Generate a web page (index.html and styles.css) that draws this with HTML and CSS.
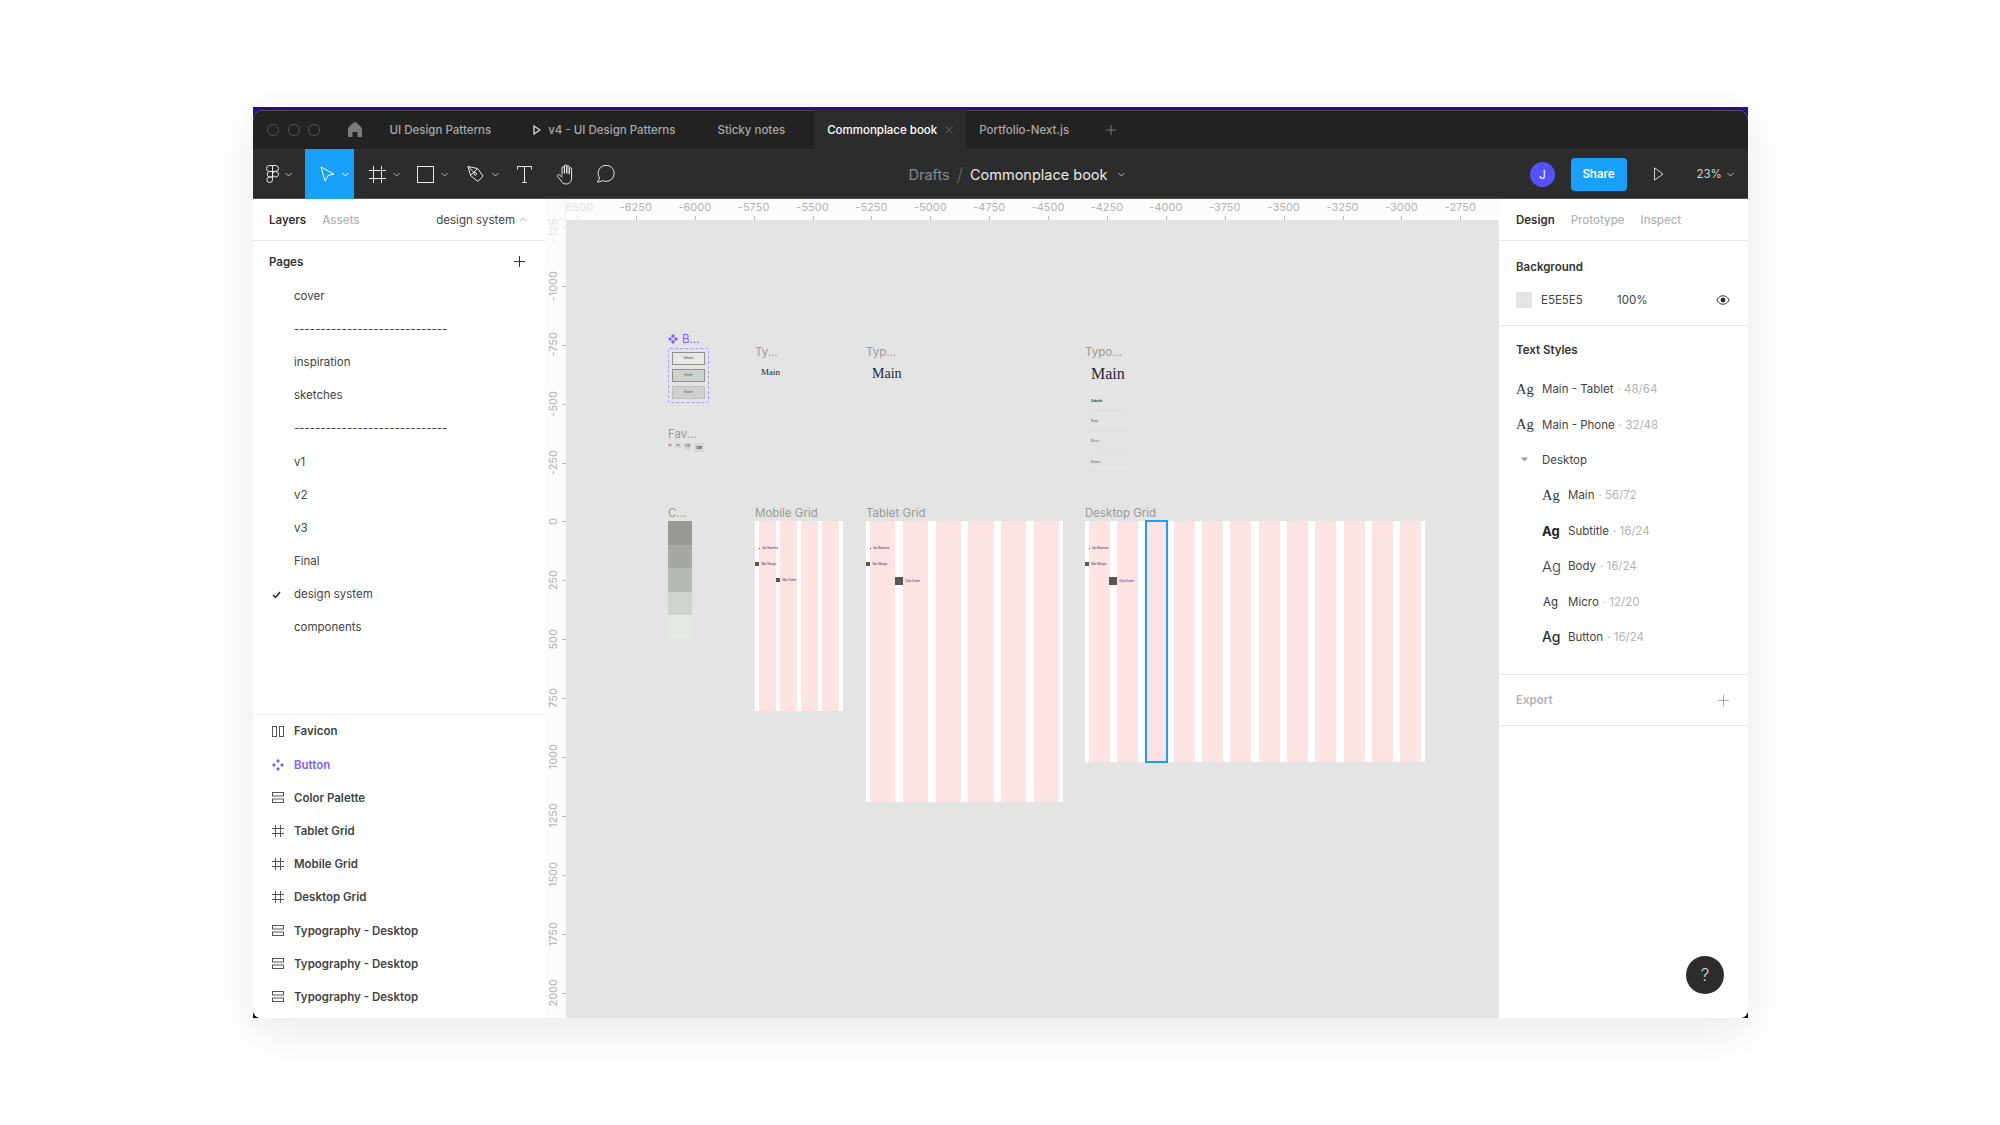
FILE: index.html
```html
<!DOCTYPE html>
<html lang="en">
<head>
    <meta charset="UTF-8">
    <title>Commonplace book - Figma</title>
    <link rel="stylesheet" href="styles.css">
</head>
<body>
    <div class="window">
        <div class="app">
            <!-- tabs -->
            <div class="tabbar">
                <div class="lights"><span></span><span></span><span></span></div>
                <svg class="home" width="16" height="15" viewBox="0 0 16 15"><path d="M8 0 C9 0 15 5 15 7 V15 H10.500 V10 H5.500 V15 H1 V7 C1 5 7 0 8 0Z" fill="#7a7a7a"/></svg>
                <div class="tab">UI Design Patterns</div>
                <div class="tab"><svg class="tab-play" width="8" height="10" viewBox="0 0 8 10"><path d="M1 1 L7 5 L1 9Z" fill="none" stroke="#e0e0e0" stroke-width="1.300"/></svg>v4 - UI Design Patterns</div>
                <div class="tab">Sticky notes</div>
                <div class="tab tab-active">Commonplace book
                    <svg class="tab-close" width="8" height="8" viewBox="0 0 8 8"><path d="M0.500 0.500 L7.500 7.500 M7.500 0.500 L0.500 7.500" stroke="#5f5f5f"/></svg>
                </div>
                <div class="tab">Portfolio-Next.js</div>
                <svg class="tab-add" width="10" height="10" viewBox="0 0 10 10"><path d="M5 0 V10 M0 5 H10" stroke="#777"/></svg>
            </div>

            <!-- toolbar -->
            <div class="toolbar">
                <div class="tools">
                    <div class="tool tool-logo">
                        <svg width="13" height="18" viewBox="0 0 13 18" fill="none" stroke="#e8e8e8"><path d="M6.500 0.500 H3.500 a3 3 0 0 0 0 6 H6.500Z M6.500 0.500 H9.500 a3 3 0 0 1 0 6 H6.500Z M6.500 6.500 H3.500 a2.800 2.800 0 0 0 0 5.500 H6.500Z M12.500 9.250 a3 2.800 0 1 1 -6 0 a3 2.800 0 1 1 6 0Z M6.500 12 H3.500 a2.800 2.800 0 1 0 3 2.800Z"/></svg>
                        <svg class="chev" width="7" height="5" viewBox="0 0 7 5"><path d="M0.500 1 L3.500 4 L6.500 1"/></svg>
                    </div>
                    <div class="tool tool-active">
                        <svg width="15" height="16" viewBox="0 0 15 16" fill="none" stroke="#fff"><path d="M1 1 L14 8 L8 9.500 L5 15Z"/></svg>
                        <svg class="chev chev-on" width="7" height="5" viewBox="0 0 7 5"><path d="M0.500 1 L3.500 4 L6.500 1"/></svg>
                    </div>
                    <div class="tool tool-frame">
                        <svg width="17" height="17" viewBox="0 0 17 17" fill="none" stroke="#e8e8e8"><path d="M4.500 0 V17 M12.500 0 V17 M0 4.500 H17 M0 12.500 H17"/></svg>
                        <svg class="chev" width="7" height="5" viewBox="0 0 7 5"><path d="M0.500 1 L3.500 4 L6.500 1"/></svg>
                    </div>
                    <div class="tool tool-rect">
                        <svg width="17" height="17" viewBox="0 0 17 17" fill="none" stroke="#e8e8e8"><rect x="0.500" y="0.500" width="16" height="16"/></svg>
                        <svg class="chev" width="7" height="5" viewBox="0 0 7 5"><path d="M0.500 1 L3.500 4 L6.500 1"/></svg>
                    </div>
                    <div class="tool tool-pen">
                        <svg width="18" height="18" viewBox="0 0 18 18" fill="none" stroke="#e8e8e8"><path d="M1 1.500 L10.500 3.500 L16 11 L11 16.500 L3.500 10.500Z M1 1.500 L7.500 8 M10.500 3.500 L3.500 10.500"/><circle cx="8.300" cy="8.800" r="1.300"/></svg>
                        <svg class="chev" width="7" height="5" viewBox="0 0 7 5"><path d="M0.500 1 L3.500 4 L6.500 1"/></svg>
                    </div>
                    <div class="tool tool-plain">
                        <svg width="15" height="17" viewBox="0 0 15 17" fill="none" stroke="#e8e8e8"><path d="M0.500 3.500 V0.500 H14.500 V3.500 M7.500 0.500 V16.500 M5 16.500 H10"/></svg>
                    </div>
                    <div class="tool tool-plain tool-hand">
                        <svg width="20" height="21" viewBox="0 0 20 21" fill="none" stroke="#e8e8e8" stroke-linejoin="round" stroke-linecap="round"><path d="M6 11 V4 a1.200 1.200 0 0 1 2.400 0 V9 M8.400 9 V2 a1.200 1.200 0 0 1 2.400 0 V9 M10.800 9 V3 a1.200 1.200 0 0 1 2.400 0 V9.500 M13.200 9.500 V5 a1.200 1.200 0 0 1 2.400 0 V14 c0 3.500 -2 6 -5.500 6 c-3 0 -4 -1.500 -5.500 -4 L1.500 12.500 c-0.800 -1.300 1 -2.600 2.200 -1.500 L6 13"/></svg>
                    </div>
                    <div class="tool tool-plain tool-comment">
                        <svg width="19" height="18" viewBox="0 0 19 18" fill="none" stroke="#e8e8e8"><path d="M1.500 17 L3.600 13 A8 8 0 1 1 6.500 15.500 C5 16.500 3 17 1.500 17Z"/></svg>
                    </div>
                </div>
                <div class="crumbs">
                    <span class="crumb-dim">Drafts</span>
                    <span class="crumb-sep">/</span>
                    <span class="crumb-file">Commonplace book</span>
                    <svg class="chev" width="7" height="5" viewBox="0 0 7 5"><path d="M0.500 1 L3.500 4 L6.500 1"/></svg>
                </div>
                <div class="actions">
                    <div class="avatar">J</div>
                    <div class="share">Share</div>
                    <svg class="present" width="10" height="14" viewBox="0 0 10 14" fill="none" stroke="#d0d0d0"><path d="M0.500 0.800 L9 7 L0.500 13.200Z"/></svg>
                    <div class="zoom-level">23%</div>
                    <svg class="chev" width="7" height="5" viewBox="0 0 7 5"><path d="M0.500 1 L3.500 4 L6.500 1"/></svg>
                </div>
            </div>

            <div class="workspace">
                <!-- left panel -->
                <aside class="left-panel">
                    <div class="panel-tabs">
                        <span class="panel-tab-on">Layers</span>
                        <span class="panel-tab-off">Assets</span>
                        <span class="page-pick">design system</span>
                        <svg class="caret-up" width="7" height="5" viewBox="0 0 7 5" fill="none" stroke="#aaa"><path d="M0.500 4 L3.500 1 L6.500 4"/></svg>
                    </div>
                    <div class="pages">
                        <div class="pages-head">
                            <span class="section-title">Pages</span>
                            <svg width="11" height="11" viewBox="0 0 11 11" stroke="#333"><path d="M5.500 0 V11 M0 5.500 H11"/></svg>
                        </div>
                        <div class="page-row">cover</div>
                        <div class="page-row">-----------------------------</div>
                        <div class="page-row">inspiration</div>
                        <div class="page-row">sketches</div>
                        <div class="page-row">-----------------------------</div>
                        <div class="page-row">v1</div>
                        <div class="page-row">v2</div>
                        <div class="page-row">v3</div>
                        <div class="page-row">Final</div>
                        <div class="page-row page-current">
                            <svg class="check" width="9" height="8" viewBox="0 0 9 8" fill="none" stroke="#222" stroke-width="1.500"><path d="M1 4 L3.500 6.500 L8 1"/></svg>
                            design system
                        </div>
                        <div class="page-row">components</div>
                    </div>
                    <div class="layers">
                        <div class="layer-row">
                            <svg width="12" height="11" viewBox="0 0 12 11" fill="none" stroke="#555"><rect x="0.500" y="0.500" width="4" height="10"/><rect x="7.500" y="0.500" width="4" height="10"/></svg>
                            Favicon
                        </div>
                        <div class="layer-row layer-comp">
                            <svg width="12" height="12" viewBox="0 0 12 12" fill="#7b61ff"><path d="M6 0 L8 2 L6 4 L4 2Z M2 4 L4 6 L2 8 L0 6Z M10 4 L12 6 L10 8 L8 6Z M6 8 L8 10 L6 12 L4 10Z"/></svg>
                            Button
                        </div>
                        <div class="layer-row">
                            <svg width="12" height="11" viewBox="0 0 12 11" fill="none" stroke="#555"><rect x="0.500" y="0.500" width="11" height="3.500"/><rect x="0.500" y="7" width="11" height="3.500"/></svg>
                            Color Palette
                        </div>
                        <div class="layer-row">
                            <svg width="12" height="12" viewBox="0 0 12 12" fill="none" stroke="#555"><path d="M3.500 0 V12 M8.500 0 V12 M0 3.500 H12 M0 8.500 H12"/></svg>
                            Tablet Grid
                        </div>
                        <div class="layer-row">
                            <svg width="12" height="12" viewBox="0 0 12 12" fill="none" stroke="#555"><path d="M3.500 0 V12 M8.500 0 V12 M0 3.500 H12 M0 8.500 H12"/></svg>
                            Mobile Grid
                        </div>
                        <div class="layer-row">
                            <svg width="12" height="12" viewBox="0 0 12 12" fill="none" stroke="#555"><path d="M3.500 0 V12 M8.500 0 V12 M0 3.500 H12 M0 8.500 H12"/></svg>
                            Desktop Grid
                        </div>
                        <div class="layer-row">
                            <svg width="12" height="11" viewBox="0 0 12 11" fill="none" stroke="#555"><rect x="0.500" y="0.500" width="11" height="3.500"/><rect x="0.500" y="7" width="11" height="3.500"/></svg>
                            Typography - Desktop
                        </div>
                        <div class="layer-row">
                            <svg width="12" height="11" viewBox="0 0 12 11" fill="none" stroke="#555"><rect x="0.500" y="0.500" width="11" height="3.500"/><rect x="0.500" y="7" width="11" height="3.500"/></svg>
                            Typography - Desktop
                        </div>
                        <div class="layer-row">
                            <svg width="12" height="11" viewBox="0 0 12 11" fill="none" stroke="#555"><rect x="0.500" y="0.500" width="11" height="3.500"/><rect x="0.500" y="7" width="11" height="3.500"/></svg>
                            Typography - Desktop
                        </div>
                    </div>
                </aside>

                <!-- canvas with rulers -->
                <main class="stage">
                    <div class="ruler-corner"></div>
                    <div class="ruler-top">
                        <span class="mark mark-fade">-6500</span>
                        <span class="mark">-6250</span>
                        <span class="mark">-6000</span>
                        <span class="mark">-5750</span>
                        <span class="mark">-5500</span>
                        <span class="mark">-5250</span>
                        <span class="mark">-5000</span>
                        <span class="mark">-4750</span>
                        <span class="mark">-4500</span>
                        <span class="mark">-4250</span>
                        <span class="mark">-4000</span>
                        <span class="mark">-3750</span>
                        <span class="mark">-3500</span>
                        <span class="mark">-3250</span>
                        <span class="mark">-3000</span>
                        <span class="mark">-2750</span>
                    </div>
                    <div class="ruler-left">
                        <span class="vmark vmark-fade"><i>-1250</i></span>
                        <span class="vmark"><i>-1000</i></span>
                        <span class="vmark"><i>-750</i></span>
                        <span class="vmark"><i>-500</i></span>
                        <span class="vmark"><i>-250</i></span>
                        <span class="vmark"><i>0</i></span>
                        <span class="vmark"><i>250</i></span>
                        <span class="vmark"><i>500</i></span>
                        <span class="vmark"><i>750</i></span>
                        <span class="vmark"><i>1000</i></span>
                        <span class="vmark"><i>1250</i></span>
                        <span class="vmark"><i>1500</i></span>
                        <span class="vmark"><i>1750</i></span>
                        <span class="vmark"><i>2000</i></span>
                    </div>
                    <div class="canvas">
                        <div class="frame frame-button">
                            <div class="frame-label label-comp">
                                <svg width="10" height="10" viewBox="0 0 12 12" fill="#7b61ff"><path d="M6 0 L8.500 2.500 L6 5 L3.500 2.500Z M2.500 3.500 L5 6 L2.500 8.500 L0 6Z M9.500 3.500 L12 6 L9.500 8.500 L7 6Z M6 7 L8.500 9.500 L6 12 L3.500 9.500Z"/></svg>
                                B...
                            </div>
                            <div class="btn-set">
                                <div class="mini-btn mini-default">Default</div>
                                <div class="mini-btn mini-hover">Hover</div>
                                <div class="mini-btn mini-active">Active</div>
                            </div>
                        </div>

                        <div class="frame frame-fav">
                            <div class="frame-label">Fav...</div>
                            <div class="fav-row">
                                <span class="fav fav-1">OB</span>
                                <span class="fav fav-2">OB</span>
                                <span class="fav fav-3">OB</span>
                                <span class="fav fav-4">OB</span>
                            </div>
                        </div>

                        <div class="frame frame-colors">
                            <div class="frame-label">C...</div>
                            <div class="swatch sw-1"></div>
                            <div class="swatch sw-2"></div>
                            <div class="swatch sw-3"></div>
                            <div class="swatch sw-4"></div>
                            <div class="swatch sw-5"></div>
                        </div>

                        <div class="frame frame-ty-s">
                            <div class="frame-label">Ty...</div>
                            <div class="type-main">Main</div>
                        </div>
                        <div class="frame frame-ty-m">
                            <div class="frame-label">Typ...</div>
                            <div class="type-main">Main</div>
                        </div>
                        <div class="frame frame-ty-l">
                            <div class="frame-label">Typo...</div>
                            <div class="type-main">Main</div>
                            <div class="type-small type-sub">Subtitle</div>
                            <div class="type-small">Body</div>
                            <div class="type-small">Micro</div>
                            <div class="type-small">Button</div>
                        </div>

                        <div class="frame frame-mobile">
                            <div class="frame-label">Mobile Grid</div>
                            <div class="grid grid-mobile">
                                <div class="col"></div><div class="col"></div><div class="col"></div><div class="col"></div>
                                <span class="note note-base"><b class="dot"></b>4pt Baseline</span>
                                <span class="note note-margin"><b class="sq"></b>16pt Margin</span>
                                <span class="note note-gutter"><b class="sq"></b>16pt Gutter</span>
                            </div>
                        </div>
                        <div class="frame frame-tablet">
                            <div class="frame-label">Tablet Grid</div>
                            <div class="grid grid-tablet">
                                <div class="col"></div><div class="col"></div><div class="col"></div>
                                <div class="col"></div><div class="col"></div><div class="col"></div>
                                <span class="note note-base"><b class="dot"></b>4pt Baseline</span>
                                <span class="note note-margin"><b class="sq"></b>16pt Margin</span>
                                <span class="note note-gutter-lg"><b class="sq-lg"></b>32pt Gutter</span>
                            </div>
                        </div>
                        <div class="frame frame-desktop">
                            <div class="frame-label">Desktop Grid</div>
                            <div class="grid grid-desktop">
                                <div class="col"></div><div class="col"></div><div class="col col-selected"></div><div class="col"></div>
                                <div class="col"></div><div class="col"></div><div class="col"></div><div class="col"></div>
                                <div class="col"></div><div class="col"></div><div class="col"></div><div class="col"></div>
                                <span class="note note-base"><b class="dot"></b>4pt Baseline</span>
                                <span class="note note-margin"><b class="sq"></b>16pt Margin</span>
                                <span class="note note-gutter-lg"><b class="sq-lg"></b>32pt Gutter</span>
                            </div>
                        </div>
                    </div>
                </main>

                <!-- right panel -->
                <aside class="right-panel">
                    <div class="panel-tabs right-tabs">
                        <span class="panel-tab-on">Design</span>
                        <span class="panel-tab-off">Prototype</span>
                        <span class="panel-tab-off">Inspect</span>
                    </div>
                    <section class="bg-section">
                        <div class="section-title">Background</div>
                        <div class="bg-row">
                            <span class="bg-swatch"></span>
                            <span class="bg-hex">E5E5E5</span>
                            <span class="bg-pct">100%</span>
                            <svg class="eye" width="14" height="10" viewBox="0 0 14 10" fill="none" stroke="#222"><path d="M0.800 5 C3 1.500 5 0.800 7 0.800 C9 0.800 11 1.500 13.200 5 C11 8.500 9 9.200 7 9.200 C5 9.200 3 8.500 0.800 5Z"/><circle cx="7" cy="5" r="2" fill="#222"/></svg>
                        </div>
                    </section>
                    <section class="styles-section">
                        <div class="section-title">Text Styles</div>
                        <div class="style-row"><span class="ag ag-serif">Ag</span><span class="style-name">Main - Tablet</span><span class="style-meta">· 48/64</span></div>
                        <div class="style-row"><span class="ag ag-serif">Ag</span><span class="style-name">Main - Phone</span><span class="style-meta">· 32/48</span></div>
                        <div class="style-row">
                            <svg class="caret" width="7" height="5" viewBox="0 0 7 5" fill="#999"><path d="M0 0.500 H7 L3.500 4.500Z"/></svg>
                            <span class="style-name">Desktop</span>
                        </div>
                        <div class="style-row style-nested"><span class="ag ag-serif">Ag</span><span class="style-name">Main</span><span class="style-meta">· 56/72</span></div>
                        <div class="style-row style-nested"><span class="ag ag-bold">Ag</span><span class="style-name">Subtitle</span><span class="style-meta">· 16/24</span></div>
                        <div class="style-row style-nested"><span class="ag ag-body">Ag</span><span class="style-name">Body</span><span class="style-meta">· 16/24</span></div>
                        <div class="style-row style-nested"><span class="ag ag-micro">Ag</span><span class="style-name">Micro</span><span class="style-meta">· 12/20</span></div>
                        <div class="style-row style-nested"><span class="ag ag-btn">Ag</span><span class="style-name">Button</span><span class="style-meta">· 16/24</span></div>
                    </section>
                    <section class="export-section">
                        <span class="export-title">Export</span>
                        <svg width="11" height="11" viewBox="0 0 11 11" stroke="#aaa"><path d="M5.500 0 V11 M0 5.500 H11"/></svg>
                    </section>
                    <div class="help">?</div>
                </aside>
            </div>
        </div>
    </div>
</body>
</html>
```

FILE: styles.css
```css
* { margin: 0; padding: 0; box-sizing: border-box; }

body {
    width: 2000px;
    height: 1125px;
    overflow: hidden;
    background: #fff;
    font-family: Inter, "Noto Sans", sans-serif;
    font-size: 11.500px;
    color: #333;
    padding: 107px 252px 0 253px;
}

.window {
    width: 1495px;
    height: 911px;
    padding-top: 3px;
    background: linear-gradient(#2a0e86 0%, #0a0530 100%);
    box-shadow: 0 12px 45px rgba(0, 0, 0, 0.09);
}
.app {
    height: 100%;
    display: flex;
    flex-direction: column;
    overflow: hidden;
    border-radius: 10px 10px 8px 8px;
    background: #fff;
}

/* tabs */
.tabbar {
    height: 39px;
    flex: none;
    display: flex;
    align-items: center;
    background: #222;
    color: #a8a8a8;
    font-weight: 500;
    box-shadow: inset 0 1px 0 #4a4a4a;
}
.lights { display: flex; gap: 8.500px; padding-left: 14px; }
.lights span {
    width: 12px;
    height: 12px;
    border: 1px solid #555;
    border-radius: 50%;
}
.home { margin-left: 26.500px; margin-right: 14px; }
.tab {
    height: 100%;
    display: flex;
    align-items: center;
    padding: 0 29px 0 13px;
    white-space: nowrap;
}
.tab-play { margin-right: 7px; }
.tab-active {
    position: relative;
    background: #2c2c2c;
    color: #fff;
}
.tab-close { position: absolute; right: 13px; top: 16px; }
.tab-add { margin-left: 8px; }

/* toolbar */
.toolbar {
    height: 50px;
    flex: none;
    display: flex;
    align-items: center;
    background: #2c2c2c;
    box-shadow: inset 0 -1px 0 #555;
}
.tools { width: 655.500px; height: 100%; display: flex; flex: none; }
.tool {
    width: 49.500px;
    height: 100%;
    display: flex;
    align-items: center;
    gap: 7px;
    padding-left: 15px;
}
.tool-logo { width: 51.500px; padding-left: 13px; gap: 6px; }
.tool-active { background: #18a0fb; padding-left: 15px; gap: 7px; }
.tool-frame { width: 47.500px; }
.tool-rect { width: 50px; }
.tool-pen { width: 51px; }
.tool-plain { width: 40px; padding-left: 14px; }
.tool-hand { padding-left: 13.500px; }
.tool-comment { padding-left: 13.500px; }
.chev { fill: none; stroke: #b5b5b5; flex: none; }
.chev-on { stroke: #fff; }

.crumbs {
    flex: 1;
    display: flex;
    align-items: center;
    font-size: 14.500px;
    white-space: nowrap;
}
.crumb-dim { color: #8a8a8a; }
.crumb-sep { color: #666; margin: 0 7px; font-size: 18px; font-weight: 300; }
.crumb-file { color: #e8e8e8; margin-right: 10px; }

.actions {
    width: 218px;
    flex: none;
    display: flex;
    align-items: center;
    color: #d0d0d0;
}
.avatar {
    width: 25px;
    height: 25px;
    border-radius: 50%;
    background: #5551ff;
    color: #fff;
    font-size: 12px;
    line-height: 25px;
    text-align: center;
}
.share {
    width: 56px;
    height: 33px;
    margin-left: 15.500px;
    border-radius: 4px;
    background: #18a0fb;
    color: #fff;
    font-weight: 600;
    line-height: 33px;
    text-align: center;
}
.present { margin-left: 27px; }
.zoom-level { margin-left: 33px; margin-right: 5px; }

/* panels */
.workspace { flex: 1; display: flex; min-height: 0; }
.left-panel {
    width: 292px;
    flex: none;
    display: flex;
    flex-direction: column;
    background: #fff;
}
.panel-tabs {
    height: 42px;
    flex: none;
    display: flex;
    align-items: center;
    padding-left: 16px;
    border-bottom: 1px solid #e8e8e8;
}
.panel-tab-on { font-weight: 600; color: #333; }
.panel-tab-off { font-weight: 500; color: #b3b3b3; margin-left: 16px; }
.page-pick { margin-left: auto; margin-right: 5px; color: #444; }
.caret-up { margin-right: 18px; }

.pages {
    flex: 1;
    border-bottom: 1px solid #ececec;
}
.pages-head {
    height: 38.600px;
    padding: 3px 20px 0 16px;
    display: flex;
    align-items: center;
    justify-content: space-between;
}
.section-title { font-weight: 600; color: #333; }
.page-row {
    position: relative;
    height: 33.200px;
    line-height: 33.200px;
    padding-left: 41px;
    color: #444;
}
.check { position: absolute; left: 19px; top: 13px; }

.layers { flex: none; padding-bottom: 4.500px; }
.layer-row {
    height: 33.200px;
    display: flex;
    align-items: center;
    gap: 10px;
    padding-left: 19px;
    font-weight: 600;
    color: #444;
}
.layer-comp { color: #7b61ff; }

.stage {
    position: relative;
    flex: 1;
    min-width: 0;
    display: grid;
    grid-template-columns: 21px 1fr;
    grid-template-rows: 21px 1fr;
    overflow: hidden;
}
.ruler-corner { grid-area: 1 / 1; background: #fcfcfc; z-index: 2; border-bottom: 1px solid #eee; border-right: 1px solid #eee; }
.ruler-top {
    grid-area: 1 / 1 / 1 / 3;
    display: flex;
    padding-left: 2.500px;
    background: #fcfcfc;
    overflow: hidden;
}
.mark {
    position: relative;
    width: 58.900px;
    flex: none;
    padding-top: 2px;
    font-size: 11px;
    line-height: 13px;
    text-align: center;
    color: #b3b3b3;
}
.mark::after {
    content: "";
    position: absolute;
    left: 50%;
    bottom: 0;
    height: 4px;
    border-left: 1px solid #bbb;
}
.mark-fade { color: #e4e4e4; }
.mark-fade::after { border-color: #e4e4e4; }
.ruler-left {
    grid-area: 2 / 1;
    display: flex;
    flex-direction: column;
    margin-top: -22.500px;
    background: #fcfcfc;
    overflow: hidden;
}
.vmark {
    position: relative;
    height: 58.900px;
    flex: none;
    display: flex;
    align-items: center;
    justify-content: center;
    padding-right: 5px;
    font-size: 11px;
    color: #b3b3b3;
}
.vmark i {
    font-style: normal;
    writing-mode: vertical-rl;
    transform: rotate(180deg);
}
.vmark::after {
    content: "";
    position: absolute;
    right: 0;
    top: 50%;
    width: 4px;
    border-top: 1px solid #bbb;
}
.vmark-fade { color: #e4e4e4; }
.vmark-fade::after { border-color: #e4e4e4; }

/* canvas, frames sit on it at their own coordinates */
.canvas {
    grid-area: 2 / 2;
    position: relative;
    background: #e4e4e4;
    overflow: hidden;
}
.frame { position: absolute; }
.frame-label {
    height: 15px;
    font-size: 11.500px;
    line-height: 14px;
    color: #999;
    white-space: nowrap;
}
.label-comp { display: flex; align-items: center; gap: 4px; color: #7b61ff; }

.frame-button { left: 102px; top: 111.500px; }
.btn-set {
    width: 41px;
    height: 55px;
    margin-top: 1px;
    display: flex;
    flex-direction: column;
    gap: 4px;
    padding: 3.500px 3px;
    border: 1px dashed #a99bff;
    border-radius: 2px;
}
.mini-btn {
    height: 13px;
    font-size: 3px;
    line-height: 11px;
    text-align: center;
    color: #444;
    border: 1px solid #8f918d;
}
.mini-default { background: #e6e9e4; }
.mini-hover { background: #cdd2cc; }
.mini-active { background: #cdd2cc; border-color: #bcc0bb; }

.frame-fav { left: 102px; top: 206.500px; }
.fav-row { display: flex; align-items: flex-start; gap: 3px; }
.fav {
    display: block;
    background: #d8d8d8;
    color: #444;
    text-align: center;
    overflow: hidden;
}
.fav-1 { width: 4px; height: 4px; font-size: 2px; line-height: 4px; margin-top: 1px; }
.fav-2 { width: 6px; height: 5px; font-size: 2px; line-height: 5px; margin-top: 1px; }
.fav-3 { width: 7px; height: 7px; font-size: 3px; line-height: 7px; margin-top: 1px; }
.fav-4 { width: 10px; height: 9px; font-size: 4px; line-height: 9px; margin-top: 1px; font-weight: 600; }

.frame-colors { left: 102px; top: 286px; width: 24px; }
.swatch { height: 23.500px; }
.sw-1 { background: #979995; }
.sw-2 { background: #a6a8a4; }
.sw-3 { background: #b6bab5; }
.sw-4 { background: #cfd4ce; }
.sw-5 { background: #e6eae4; }

.frame-ty-s { left: 189px; top: 124.500px; }
.frame-ty-m { left: 300px; top: 124.500px; }
.frame-ty-l { left: 519px; top: 124.500px; }
.type-main { font-family: "Liberation Serif", serif; color: #26263a; line-height: 20px; }
.frame-ty-s .type-main { font-size: 9px; margin: 2px 0 0 6px; }
.frame-ty-m .type-main { font-size: 14px; margin: 4px 0 0 6px; }
.frame-ty-l .type-main { font-size: 16px; margin: 4px 0 0 6px; }
.type-small {
    width: 36px;
    height: 20.400px;
    margin-left: 6px;
    font-size: 3px;
    line-height: 20.400px;
    color: #555;
    border-bottom: 1px solid #e0e0e0;
}
.type-sub { margin-top: 7px; font-weight: 700; color: #333; }

.frame-mobile { left: 189px; top: 286px; }
.frame-tablet { left: 300px; top: 286px; }
.frame-desktop { left: 519px; top: 286px; }
.grid {
    position: relative;
    display: flex;
    padding: 0 4px;
    background: #fff;
}
.col { flex: 1; background: #fee3e4; }
.grid-mobile { width: 88px; height: 190px; gap: 4px; }
.grid-tablet { width: 197px; height: 281px; gap: 7.500px; }
.grid-desktop { width: 340px; height: 241px; gap: 7.300px; }
.col-selected { outline: 2px solid #18a0fb; outline-offset: -1px; position: relative; z-index: 1; }

.note {
    position: absolute;
    display: flex;
    align-items: center;
    font-size: 2.800px;
    color: #3a2a55;
    white-space: nowrap;
}
.note-base { left: 4px; top: 25px; gap: 2px; }
.note-margin { left: 0; top: 41px; gap: 2px; }
.note-gutter { left: 21px; top: 57px; gap: 2px; }
.note-gutter-lg { left: 29px; top: 56px; gap: 2px; }
.grid-desktop .note-gutter-lg { left: 24px; }
.dot { width: 1px; height: 1px; background: #555; }
.sq { width: 4px; height: 4px; background: #555752; }
.sq-lg { width: 8px; height: 8px; background: #555752; }

/* right panel */
.right-panel {
    position: relative;
    width: 249px;
    flex: none;
    background: #fff;
}
.right-tabs { padding-left: 17px; }
.right-tabs .panel-tab-off { margin-left: 16px; }
.bg-section {
    height: 85px;
    padding: 19px 17px 0;
    border-bottom: 1px solid #e8e8e8;
}
.bg-row { display: flex; align-items: center; margin-top: 18px; color: #444; }
.bg-swatch { width: 16px; height: 16px; background: #e5e5e5; }
.bg-hex { width: 76px; margin-left: 9px; }
.eye { margin-left: auto; margin-right: 1px; }
.styles-section {
    height: 349px;
    padding: 17px 17px 0;
    border-bottom: 1px solid #e8e8e8;
}
.styles-section .section-title { margin-bottom: 14.500px; }
.style-row {
    height: 35.400px;
    display: flex;
    align-items: center;
    white-space: nowrap;
}
.style-name { color: #444; margin-left: 9px; }
.style-meta { color: #b3b3b3; margin-left: 4px; }
.ag { width: 17px; display: block; text-align: center; color: #333; }
.ag-serif { font-family: "Liberation Serif", serif; font-size: 14.500px; }
.ag-bold { font-size: 13px; font-weight: 700; color: #222; }
.ag-body { font-size: 15px; font-weight: 300; color: #444; }
.ag-micro { font-size: 11.500px; }
.ag-btn { font-size: 14px; font-weight: 500; }
.caret { margin-left: 5px; margin-right: 5px; }
.style-nested { padding-left: 26px; }
.export-section {
    height: 51px;
    display: flex;
    align-items: center;
    justify-content: space-between;
    padding: 0 19px 0 17px;
    border-bottom: 1px solid #e8e8e8;
}
.export-title { font-weight: 600; color: #b3b3b3; }
.help {
    position: absolute;
    right: 24px;
    bottom: 24px;
    width: 38px;
    height: 38px;
    border-radius: 50%;
    background: #2c2c2c;
    color: #ddd;
    font-size: 17px;
    font-weight: 300;
    line-height: 38px;
    text-align: center;
}
```
